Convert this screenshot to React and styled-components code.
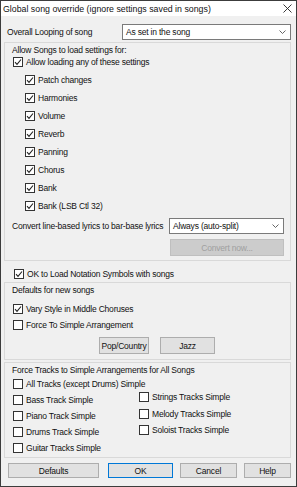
import styled, { createGlobalStyle } from 'styled-components';

const GlobalStyle = createGlobalStyle`
  html, body {
    margin: 0;
    padding: 0;
    background: #f0f0f0;
  }
  body {
    font-family: 'Liberation Sans', Arial, sans-serif;
    font-size: 8.5px;
    letter-spacing: -0.2px;
    color: #111;
  }
  * { box-sizing: border-box; }
`;

const Window = styled.div`
  width: 297px;
  height: 487px;
  border: 1px solid #3c3c3c;
  background: #f0f0f0;
  display: flex;
  flex-direction: column;
  overflow: hidden;
`;

const TitleBar = styled.div`
  height: 15px;
  background: #fff;
  display: flex;
  align-items: center;
  justify-content: space-between;
  padding: 0 4px 0 2px;
  font-size: 8.8px;
  letter-spacing: 0;
  color: #111;
`;

const Body = styled.div`
  flex: 1;
  display: flex;
  flex-direction: column;
  padding: 0 5px 0 3px;
`;

const FieldRow = styled.div`
  display: flex;
  align-items: center;
  justify-content: space-between;
  height: 16px;
  margin-top: ${p => p.$top || 0}px;
  padding-left: ${p => p.$left || 0}px;
  padding-right: ${p => p.$right || 0}px;
`;

const Select = styled.div`
  width: ${p => p.$width}px;
  height: 16px;
  background: #fff;
  border: 1px solid #7a7a7a;
  display: flex;
  align-items: center;
  justify-content: space-between;
  padding: 0 4px 0 3px;
`;

const Group = styled.div`
  border: 1px solid #d9d9d9;
  margin-top: ${p => p.$top || 0}px;
  padding: 1px 6px ${p => p.$bottom || 0}px 7px;
  display: flex;
  flex-direction: column;
`;

const GroupLabel = styled.div`
  line-height: 12px;
  height: 12px;
  margin-bottom: ${p => p.$after || 0}px;
`;

const CheckRow = styled.label`
  display: flex;
  align-items: center;
  height: ${p => p.$h || 18}px;
  padding-left: ${p => p.$indent || 1}px;
  margin-top: ${p => p.$top || 0}px;
  white-space: nowrap;
`;

const Box = styled.span`
  width: 10px;
  height: 10px;
  border: 1px solid #333;
  background: #fff;
  margin-right: 3px;
  display: flex;
  align-items: center;
  justify-content: center;
  flex: none;
`;

const Button = styled.div`
  width: ${p => p.$width}px;
  height: ${p => p.$h || 17}px;
  background: ${p => (p.$disabled ? '#cccccc' : '#e1e1e1')};
  border: 1px solid ${p => (p.$default ? '#0078d7' : p.$disabled ? '#bfbfbf' : '#adadad')};
  color: ${p => (p.$disabled ? '#a0a0a0' : '#111')};
  margin-left: ${p => p.$left || 0}px;
  display: flex;
  align-items: center;
  justify-content: center;
  flex: none;
`;

const ButtonRow = styled.div`
  display: flex;
  gap: ${p => p.$gap || 0}px;
  margin-top: ${p => p.$top || 0}px;
  padding-left: ${p => p.$left || 0}px;
  justify-content: ${p => p.$justify || 'flex-start'};
`;

const Columns = styled.div`
  display: flex;
`;

const Column = styled.div`
  display: flex;
  flex-direction: column;
  width: ${p => p.$width}px;
  margin-top: ${p => p.$top || 0}px;
`;

const Chevron = () => (
  <svg width="7" height="4" viewBox="0 0 7 4">
    <path d="M0.5 0.5 L3.5 3.5 L6.5 0.5" fill="none" stroke="#555" strokeWidth="0.9" />
  </svg>
);

const Close = () => (
  <svg width="9" height="9" viewBox="0 0 9 9">
    <path d="M0.5 0.5 L8.5 8.5 M8.5 0.5 L0.5 8.5" stroke="#222" strokeWidth="0.9" />
  </svg>
);

function Check({ label, checked, indent, h, top }) {
  return (
    <CheckRow $indent={indent} $h={h} $top={top}>
      <Box>
        {checked && (
          <svg width="8" height="8" viewBox="0 0 8 8">
            <path d="M1 4.2 L3 6.3 L7 1.5" fill="none" stroke="#222" strokeWidth="1.1" />
          </svg>
        )}
      </Box>
      {label}
    </CheckRow>
  );
}

const loadItems = ['Patch changes', 'Harmonies', 'Volume', 'Reverb', 'Panning', 'Chorus', 'Bank', 'Bank (LSB Ctl 32)'];

export default function App() {
  return (
    <Window>
      <GlobalStyle />
      <TitleBar>
        <span>Global song override (ignore settings saved in songs)</span>
        <Close />
      </TitleBar>
      <Body>
        <FieldRow $top={8} $left={3}>
          <span>Overall Looping of song</span>
          <Select $width={169}>
            <span>As set in the song</span>
            <Chevron />
          </Select>
        </FieldRow>

        <Group $top={2} $bottom={4}>
          <GroupLabel $after={-3}>Allow Songs to load settings for:</GroupLabel>
          <Check label="Allow loading any of these settings" checked />
          {loadItems.map(item => (
            <Check key={item} label={item} checked indent={13} />
          ))}
          <FieldRow $top={3}>
            <span>Convert line-based lyrics to bar-base lyrics</span>
            <Select $width={115}>
              <span>Always (auto-split)</span>
              <Chevron />
            </Select>
          </FieldRow>
          <ButtonRow $top={5} $justify="flex-end">
            <Button $width={114} $disabled>Convert now...</Button>
          </ButtonRow>
        </Group>

        <Check label="OK to Load Notation Symbols with songs" checked indent={10} h={16} top={5} />

        <Group $bottom={5}>
          <GroupLabel $after={5}>Defaults for new songs</GroupLabel>
          <Check label="Vary Style in Middle Choruses" checked h={16} />
          <Check label="Force To Simple Arrangement" h={16} />
          <ButtonRow $top={4} $left={87} $gap={11}>
            <Button $width={50}>Pop/Country</Button>
            <Button $width={55}>Jazz</Button>
          </ButtonRow>
        </Group>

        <Group $top={2} $bottom={1}>
          <GroupLabel>Force Tracks to Simple Arrangements for All Songs</GroupLabel>
          <Check label="All Tracks (except Drums) Simple" h={16} />
          <Columns>
            <Column $width={126}>
              <Check label="Bass Track Simple" h={16} />
              <Check label="Piano Track Simple" h={16} />
              <Check label="Drums Track Simple" h={16} />
              <Check label="Guitar Tracks Simple" h={16} />
            </Column>
            <Column $width={140} $top={-3}>
              <Check label="Strings Tracks Simple" h={16.5} />
              <Check label="Melody Tracks Simple" h={16.5} />
              <Check label="Soloist Tracks Simple" h={16.5} />
            </Column>
          </Columns>
        </Group>

        <ButtonRow $top={5} $left={4}>
          <Button $width={91} $h={15}>Defaults</Button>
          <Button $width={65} $h={15} $default $left={9}>OK</Button>
          <Button $width={57} $h={15} $left={7}>Cancel</Button>
          <Button $width={47} $h={15} $left={7}>Help</Button>
        </ButtonRow>
      </Body>
    </Window>
  );
}
